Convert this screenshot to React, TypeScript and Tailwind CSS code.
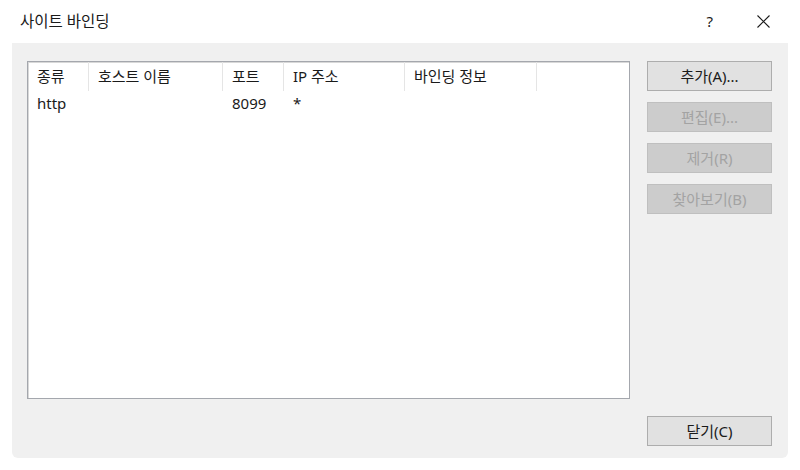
import React from 'react';

const font = { fontFamily: '"Noto Sans", "Noto Sans CJK KR", sans-serif' };

const columns = [
  { label: '종류', width: 'w-[61px]' },
  { label: '호스트 이름', width: 'w-[134px]' },
  { label: '포트', width: 'w-[61px]' },
  { label: 'IP 주소', width: 'w-[121px]' },
  { label: '바인딩 정보', width: 'w-[132px]' },
];

const rows = [['http', '', '8099', '*', '']];

const DialogButton: React.FC<{ label: string; disabled?: boolean }> = ({ label, disabled }) => (
  <button
    disabled={disabled}
    className={
      disabled
        ? 'w-[125px] h-[30px] border border-[#bfbfbf] bg-[#cccccc] text-[#a3a3a3] text-[15px] flex items-center justify-center'
        : 'w-[125px] h-[30px] border border-[#adadad] bg-[#e1e1e1] text-[#1a1a1a] text-[15px] flex items-center justify-center'
    }
  >
    {label}
  </button>
);

export default function App() {
  return (
    <div className="w-[800px] h-[470px] bg-white flex flex-col" style={font}>
      {/* Title bar */}
      <div className="h-[43px] flex items-center pl-[20px] pr-[30px]">
        <span className="text-[15.5px] text-[#1a1a1a]">사이트 바인딩</span>
        <span className="ml-auto text-[15px] text-[#1a1a1a] mr-[44px]">?</span>
        <svg width="13" height="13" viewBox="0 0 13 13" className="text-[#1a1a1a]">
          <path d="M0.5 0.5 L12.5 12.5 M12.5 0.5 L0.5 12.5" stroke="currentColor" strokeWidth="1.1" fill="none" />
        </svg>
      </div>

      {/* Body */}
      <div className="mx-[12px] h-[415px] bg-[#f0f0f0] rounded-b-[6px] flex pt-[18px] pl-[15px] pb-[12px]">
        <div className="w-[603px] h-[338px] bg-white border border-[#a4a7ad] shadow-[inset_1px_1px_0_#d8d8d8]">
          <div className="flex h-[29px]">
            {columns.map((c) => (
              <div
                key={c.label}
                className={`${c.width} border-r border-[#e5e5e5] pl-[9px] flex items-center text-[15px] text-[#1a1a1a]`}
              >
                {c.label}
              </div>
            ))}
          </div>
          {rows.map((r, i) => (
            <div key={i} className="flex h-[25px]">
              {r.map((cell, j) => (
                <div key={j} className={`${columns[j].width} pl-[9px] flex items-center text-[15px] text-[#1a1a1a]`}>
                  {cell}
                </div>
              ))}
            </div>
          ))}
        </div>

        <div className="ml-[17px] flex flex-col">
          <div className="flex flex-col gap-[11px]">
            <DialogButton label="추가(A)..." />
            <DialogButton label="편집(E)..." disabled />
            <DialogButton label="제거(R)" disabled />
            <DialogButton label="찾아보기(B)" disabled />
          </div>
          <div className="mt-auto">
            <DialogButton label="닫기(C)" />
          </div>
        </div>
      </div>
    </div>
  );
}
